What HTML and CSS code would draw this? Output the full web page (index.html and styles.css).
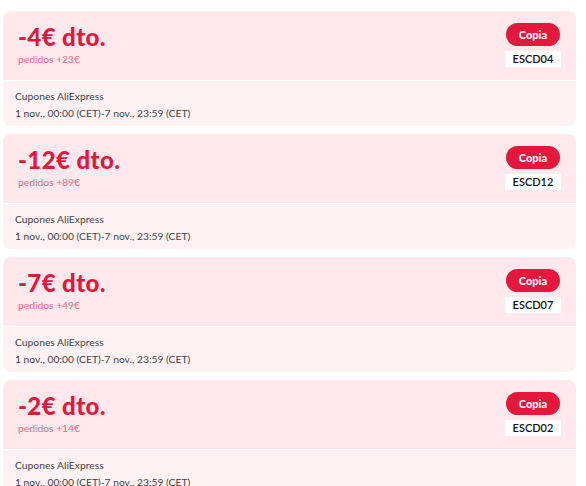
FILE: index.html
```html
<!DOCTYPE html>
<html lang="es">
<head>
<meta charset="utf-8">
<link rel="stylesheet" href="styles.css">
</head>
<body>
<div class="list">
  <div class="coupon">
    <div class="top">
      <div class="info">
        <div class="amount">-4€ dto.</div>
        <div class="cond">pedidos +23€</div>
      </div>
      <div class="actions">
        <button class="copy">Copia</button>
        <div class="code">ESCD04</div>
      </div>
    </div>
    <div class="bottom">
      <div class="src">Cupones AliExpress</div>
      <div class="date">1 nov., 00:00 (CET)-7 nov., 23:59 (CET)</div>
    </div>
  </div>
  <div class="coupon">
    <div class="top">
      <div class="info">
        <div class="amount">-12€ dto.</div>
        <div class="cond">pedidos +89€</div>
      </div>
      <div class="actions">
        <button class="copy">Copia</button>
        <div class="code">ESCD12</div>
      </div>
    </div>
    <div class="bottom">
      <div class="src">Cupones AliExpress</div>
      <div class="date">1 nov., 00:00 (CET)-7 nov., 23:59 (CET)</div>
    </div>
  </div>
  <div class="coupon">
    <div class="top">
      <div class="info">
        <div class="amount">-7€ dto.</div>
        <div class="cond">pedidos +49€</div>
      </div>
      <div class="actions">
        <button class="copy">Copia</button>
        <div class="code">ESCD07</div>
      </div>
    </div>
    <div class="bottom">
      <div class="src">Cupones AliExpress</div>
      <div class="date">1 nov., 00:00 (CET)-7 nov., 23:59 (CET)</div>
    </div>
  </div>
  <div class="coupon">
    <div class="top">
      <div class="info">
        <div class="amount">-2€ dto.</div>
        <div class="cond">pedidos +14€</div>
      </div>
      <div class="actions">
        <button class="copy">Copia</button>
        <div class="code">ESCD02</div>
      </div>
    </div>
    <div class="bottom">
      <div class="src">Cupones AliExpress</div>
      <div class="date">1 nov., 00:00 (CET)-7 nov., 23:59 (CET)</div>
    </div>
  </div>
</div>
</body>
</html>
```
FILE: styles.css
```css
html, body {
  margin: 0;
  padding: 0;
  background: #fff;
  overflow: hidden;
}
body {
  font-family: "Lato", "Open Sans", sans-serif;
}
.list {
  display: flex;
  flex-direction: column;
  gap: 8px;
  padding: 11px 10px 0 3px;
}
.coupon {
  display: flex;
  flex-direction: column;
  gap: 1px;
  border-radius: 7px;
  overflow: hidden;
}
.top {
  background: #ffe9ed;
  height: 69px;
  box-sizing: border-box;
  display: flex;
  justify-content: space-between;
  padding: 12px 15px 0 15px;
  border-radius: 7px 7px 0 0;
}
.amount {
  color: #e3163b;
  font-weight: 900;
  font-size: 24px;
  line-height: 28px;
  letter-spacing: 0.4px;
}
.cond {
  color: #ec6f86;
  font-size: 10.3px;
  line-height: 14px;
  margin-top: 1px;
}
.actions {
  display: flex;
  flex-direction: column;
  align-items: center;
  gap: 5px;
}
.copy {
  border: none;
  background: #e5173d;
  color: #fff;
  font-family: inherit;
  font-weight: 900;
  font-size: 11px;
  width: 54px;
  height: 23px;
  border-radius: 12px;
  padding: 0;
}
.code {
  background: #fff;
  color: #111;
  font-size: 11px;
  font-weight: 600;
  width: 56px;
  height: 16px;
  line-height: 16px;
  text-align: center;
}
.bottom {
  background: #fff2f4;
  height: 45px;
  box-sizing: border-box;
  padding: 9px 12px 0 12px;
  border-radius: 0 0 7px 7px;
  font-size: 10.3px;
  color: #444;
}
.src {
  line-height: 13px;
}
.date {
  line-height: 13px;
  margin-top: 4px;
}
```
